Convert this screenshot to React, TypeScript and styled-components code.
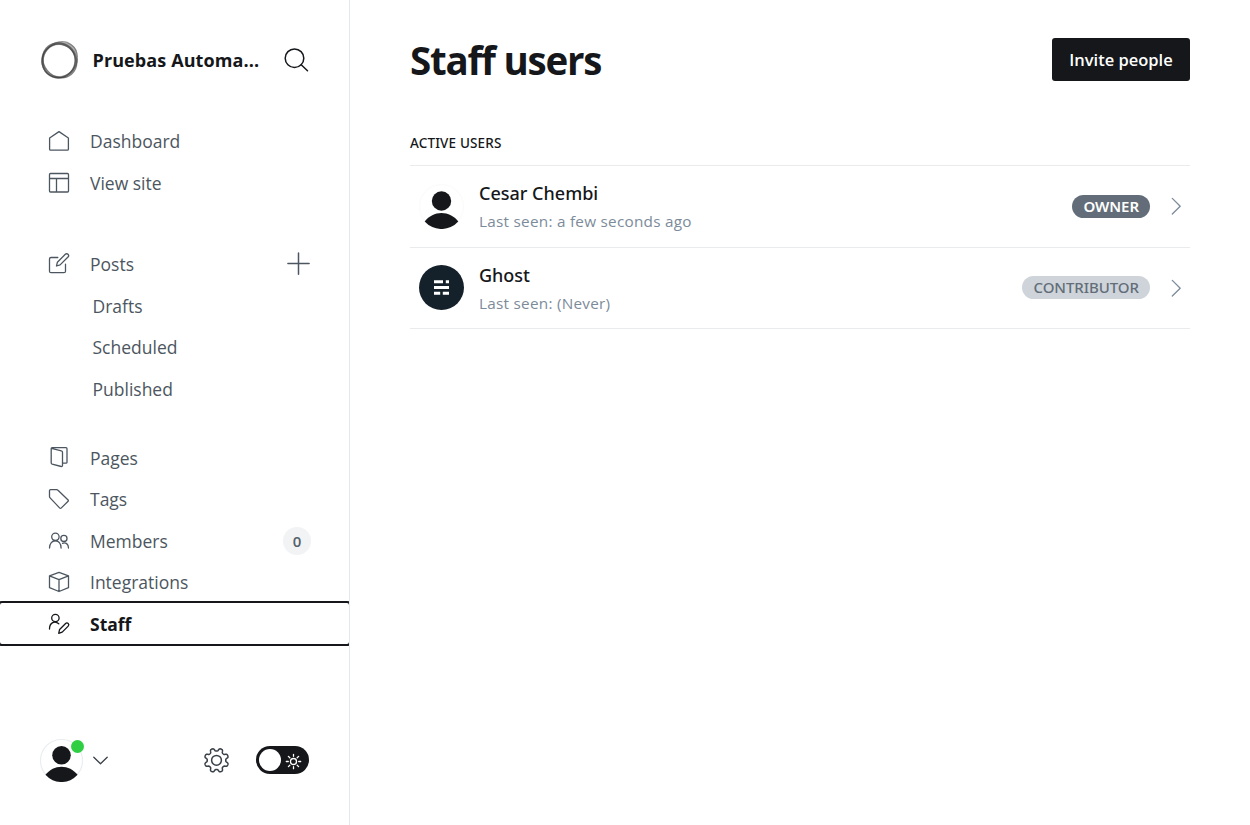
import React from "react";
import styled, { createGlobalStyle } from "styled-components";

const GlobalStyle = createGlobalStyle`
  * { box-sizing: border-box; }
  body {
    margin: 0;
    background: #fff;
    color: #15171a;
    font-family: "Open Sans", "Noto Sans", sans-serif;
    overflow: hidden;
  }
`;

const Shell = styled.div`
  display: flex;
  height: 825px;
`;

const Sidebar = styled.aside`
  width: 350px;
  flex: none;
  display: flex;
  flex-direction: column;
  border-right: 1px solid #e6e9eb;
  overflow: hidden;
`;

const SiteHeader = styled.header`
  display: flex;
  align-items: center;
  height: 120.4px;
  padding: 0 40px 0.6px 40px;
`;

const SiteName = styled.div`
  flex: 1;
  margin-left: 12.5px;
  font-size: 18px;
  font-weight: 700;
  letter-spacing: 0.1px;
  white-space: nowrap;
`;

const NavGroup = styled.nav<{ $gap: number }>`
  display: flex;
  flex-direction: column;
  margin-bottom: ${(p) => p.$gap}px;
`;

const NavItem = styled.a<{ $active?: boolean }>`
  display: flex;
  align-items: center;
  height: 41.5px;
  padding: 0 38px 0 47px;
  font-size: 17.5px;
  font-weight: ${(p) => (p.$active ? 700 : 400)};
  color: ${(p) => (p.$active ? "#15171a" : "#4c5660")};
  outline: ${(p) => (p.$active ? "2px solid #15171a" : "none")};
  border-radius: 2px;
`;

const NavLabel = styled.span<{ $sub?: boolean }>`
  flex: 1;
  margin-left: ${(p) => (p.$sub ? 45.5 : 19)}px;
`;

const Count = styled.span`
  width: 28px;
  height: 28px;
  border-radius: 50%;
  background: #f1f3f4;
  color: #54606a;
  font-size: 15px;
  font-weight: 600;
  line-height: 29px;
  text-align: center;
`;

const Footer = styled.footer`
  display: flex;
  align-items: center;
  height: 44px;
  margin-top: auto;
  margin-bottom: 43px;
  padding: 0 40px;
`;

const UserMenu = styled.div`
  position: relative;
  display: flex;
  align-items: center;
  gap: 9px;
  flex: 1;
`;

const OnlineDot = styled.span`
  position: absolute;
  left: 31px;
  top: 1px;
  width: 13px;
  height: 13px;
  border-radius: 50%;
  background: #30cf43;
`;

const Toggle = styled.div`
  display: flex;
  align-items: center;
  width: 53px;
  height: 28px;
  margin-left: 26px;
  padding: 0 7px 0 3px;
  justify-content: space-between;
  border-radius: 14px;
  background: #15171a;
`;

const Knob = styled.span`
  width: 22px;
  height: 22px;
  border-radius: 50%;
  background: #fff;
`;

const Main = styled.main`
  flex: 1;
  padding: 0 60px;
`;

const PageHeader = styled.header`
  display: flex;
  align-items: center;
  justify-content: space-between;
  height: 120px;
`;

const Title = styled.h1`
  margin: 0 0 1px;
  font-size: 38.5px;
  font-weight: 700;
  letter-spacing: -1.25px;
  line-height: 48px;
`;

const InviteButton = styled.button`
  width: 138px;
  height: 43px;
  margin-top: -1px;
  padding: 0;
  border: 0;
  border-radius: 3px;
  background: #15171a;
  color: #fff;
  font: 600 16.5px "Open Sans", sans-serif;
  white-space: nowrap;
`;

const SectionLabel = styled.h2`
  margin: 0;
  height: 46px;
  padding-top: 13px;
  border-bottom: 1px solid #e9ebed;
  font-family: "Noto Sans", sans-serif;
  font-size: 13.5px;
  font-weight: 500;
  line-height: 20px;
  letter-spacing: 0.15px;
`;

const UserRow = styled.div`
  display: flex;
  align-items: center;
  height: 81.5px;
  padding: 0 8px 0 9px;
  border-bottom: 1px solid #e9ebed;
`;

const UserInfo = styled.div`
  flex: 1;
  margin-left: 15px;
  padding-top: 2px;
`;

const UserName = styled.div`
  font-family: "Noto Sans", sans-serif;
  font-size: 18px;
  font-weight: 500;
  line-height: 28px;
`;

const LastSeen = styled.div`
  font-size: 15.3px;
  line-height: 28px;
  letter-spacing: 0.26px;
  color: #7c8b9a;
`;

const Badge = styled.span<{ $bg: string; $fg: string; $weight: number }>`
  height: 23px;
  margin-right: 20px;
  padding: 0 11px;
  border-radius: 12px;
  background: ${(p) => p.$bg};
  color: ${(p) => p.$fg};
  font: ${(p) => p.$weight} 15px/23px "Noto Sans", sans-serif;
  letter-spacing: -0.05px;
`;

const Icon = styled.svg`
  display: block;
  flex: none;
  fill: none;
  stroke: currentColor;
  stroke-width: 1.3;
  stroke-linecap: round;
  stroke-linejoin: round;
`;

const NavIcon = ({ children }: { children: React.ReactNode }) => (
  <Icon width="24" height="24" viewBox="0 0 24 24">{children}</Icon>
);

const PersonAvatar = ({ size, ring }: { size: number; ring: string }) => (
  <Icon width={size} height={size} viewBox="0 0 45 45">
    <circle cx="22.5" cy="22.5" r="22" fill="#fff" stroke={ring} />
    <g fill="#15171a" stroke="none">
      <circle cx="22.5" cy="17" r="9.7" />
      <path d="M5.7 37.5C10 32 16 29 22.5 29S35 32 39.3 37.5A22.5 22.5 0 0 1 5.7 37.5z" />
    </g>
  </Icon>
);

const GhostAvatar = () => (
  <Icon width="45" height="45" viewBox="0 0 45 45">
    <circle cx="22.5" cy="22.5" r="22.5" fill="#15212a" stroke="none" />
    <path
      d="M15 15.2h9v3h-9zM26.8 15.2H30v3h-3.2zM15 21h15v3H15zM15 26.8h6.2v3H15zM23.8 26.8H30v3h-6.2z"
      fill="#fff"
      stroke="none"
    />
  </Icon>
);

const SiteLogo = () => (
  <Icon width="40" height="40" viewBox="0 0 40 40">
    <g strokeOpacity="0.55">
      <circle cx="18.8" cy="21" r="16.8" stroke="#333" />
      <ellipse cx="20.2" cy="19.4" rx="18.4" ry="16.4" transform="rotate(-52 20.2 19.4)" stroke="#444" />
      <ellipse cx="19.8" cy="20.2" rx="18.2" ry="16.2" transform="rotate(50 19.8 20.2)" stroke="#222" />
      <ellipse cx="18.6" cy="20.8" rx="16.4" ry="17.2" transform="rotate(20 18.6 20.8)" stroke="#222" />
    </g>
    <path
      d="M14 3.800C24 0.500 33 3 36.500 10l.8 7C34 10 27 5.500 14 3.800zM37.500 19c0 9-5 15-13 17.500 7-4 11-10 13-17.500z"
      fill="#666"
      fillOpacity="0.5"
      stroke="none"
    />
    <circle cx="19.200" cy="20.600" r="16.800" stroke="#555" strokeOpacity="0.4" style={{ strokeWidth: 2.600 }} />
  </Icon>
);

const gearPath =
  Array.from({ length: 160 }, (_, i) => {
    const a = (i / 160) * Math.PI * 2;
    const r = 10.7 + 1.5 * Math.tanh(-2 * Math.cos(8 * a));
    return `${i ? "L" : "M"}${(12.5 + r * Math.cos(a)).toFixed(2)} ${(13.3 + r * Math.sin(a)).toFixed(2)}`;
  }).join("") + "z";

const Gear = () => (
  <Icon width="26" height="26" viewBox="0 0 26 26" color="#394047" style={{ strokeWidth: 1.5 }}>
    <path d={gearPath} />
    <circle cx="12.5" cy="13.3" r="4.9" />
  </Icon>
);

const Sun = () => (
  <Icon width="17" height="17" viewBox="0 0 17 17" color="#fff" style={{ marginTop: 2 }}>
    <circle cx="8.5" cy="8.5" r="3" />
    <path d="M8.5 1.3v2M8.5 13.7v2M1.3 8.5h2M13.7 8.5h2M3.4 3.4l1.4 1.4M12.2 12.2l1.4 1.4M3.4 13.6l1.4-1.4M12.2 4.8l1.4-1.4" />
  </Icon>
);

const RowArrow = () => (
  <Icon width="12" height="18" viewBox="0 0 12 18" color="#7c8b9a">
    <path d="M2.3 1.4L10.2 9.200l-7.900 7.800" />
  </Icon>
);

const icons = {
  home: <path d="M2.6 9L12 2.600l9.400 6.400v11.200a1 1 0 0 1-1 1H3.600a1 1 0 0 1-1-1z" />,
  layout: <path d="M3.500 2.500h17a1 1 0 0 1 1 1v16.500a1 1 0 0 1-1 1h-17a1 1 0 0 1-1-1V3.500a1 1 0 0 1 1-1zM2.500 7.500h19M9.500 7.500v13.500" />,
  posts: (
    <path d="M10.800 5.500H4a1.500 1.500 0 0 0-1.500 1.500v12.200a1.500 1.500 0 0 0 1.500 1.500H17a1.500 1.500 0 0 0 1.500-1.500v-7M9.500 14l.9-3.800 7.900-7.900a1.900 1.900 0 0 1 2.700 2.700l-7.900 7.900z" />
  ),
  pages: <path d="M4.400 2.300l10 2.500a1.400 1.400 0 0 1 1.100 1.400v13.300a1 1 0 0 1-1.300 1l-9-2.300a1.400 1.400 0 0 1-1-1.400V2.600a.9.900 0 0 1 .9-.9H19a1 1 0 0 1 1 1v13.500a1 1 0 0 1-1 1h-3.300" />,
  tag: <path d="M3.600 2.700h6a2 2 0 0 1 1.400.6l10.100 9.700a.9.900 0 0 1 0 1.300l-7 6.800a.9.900 0 0 1-1.300 0L3.100 10.900a2 2 0 0 1-.6-1.400V3.700a1 1 0 0 1 1.100-1z" />,
  members: (
    <>
      <circle cx="8.400" cy="7.800" r="3.700" />
      <circle cx="16.900" cy="9.400" r="3.100" />
      <path d="M2.500 19.100c0-9.600 11.400-10 11.600 0M15.500 14.300c3-1.300 6 .6 6 4.800" />
    </>
  ),
  box: <path d="M12 2.300l9.500 3.500v11.900L12 21.500l-9.500-3.800V5.800zM2.500 5.800L12 9.700l9.500-3.900M12 9.700v11.800" />,
  staff: (
    <>
      <circle cx="8.400" cy="6" r="3.700" />
      <path d="M2.500 17c0-6.500 5.500-8.600 9.300-5.200M11.700 21.300l.9-3.800 6-6a1.800 1.800 0 0 1 2.600 2.600l-6 6z" />
    </>
  ),
};

export default function App() {
  return (
    <Shell>
      <GlobalStyle />
      <Sidebar>
        <SiteHeader>
          <SiteLogo />
          <SiteName>Pruebas Automa...</SiteName>
          <Icon width="26" height="26" viewBox="0 0 26 26" style={{ strokeWidth: 1.5 }}>
            <circle cx="11.500" cy="11.200" r="9.300" />
            <path d="M18.200 17.800l6.300 6" />
          </Icon>
        </SiteHeader>
        <NavGroup $gap={40.2}>
          <NavItem><NavIcon>{icons.home}</NavIcon><NavLabel>Dashboard</NavLabel></NavItem>
          <NavItem><NavIcon>{icons.layout}</NavIcon><NavLabel>View site</NavLabel></NavItem>
        </NavGroup>
        <NavGroup $gap={27.2}>
          <NavItem>
            <NavIcon>{icons.posts}</NavIcon>
            <NavLabel>Posts</NavLabel>
            <Icon width="26" height="26" viewBox="0 0 26 26" style={{ strokeWidth: 1.5 }}>
              <path d="M13.500 2v21.200M2.900 12.500h21.200" />
            </Icon>
          </NavItem>
          {["Drafts", "Scheduled", "Published"].map((label) => (
            <NavItem key={label}><NavLabel $sub>{label}</NavLabel></NavItem>
          ))}
        </NavGroup>
        <NavGroup $gap={0}>
          <NavItem><NavIcon>{icons.pages}</NavIcon><NavLabel>Pages</NavLabel></NavItem>
          <NavItem><NavIcon>{icons.tag}</NavIcon><NavLabel>Tags</NavLabel></NavItem>
          <NavItem><NavIcon>{icons.members}</NavIcon><NavLabel>Members</NavLabel><Count>0</Count></NavItem>
          <NavItem><NavIcon>{icons.box}</NavIcon><NavLabel>Integrations</NavLabel></NavItem>
          <NavItem $active><NavIcon>{icons.staff}</NavIcon><NavLabel>Staff</NavLabel></NavItem>
        </NavGroup>
        <Footer>
          <UserMenu>
            <PersonAvatar size={43} ring="#ebeef0" />
            <OnlineDot />
            <Icon width="16" height="10" viewBox="0 0 16 10" color="#394047">
              <path d="M1.800 2.300L8.500 8.800l6.700-6.500" />
            </Icon>
          </UserMenu>
          <Gear />
          <Toggle><Knob /><Sun /></Toggle>
        </Footer>
      </Sidebar>
      <Main>
        <PageHeader>
          <Title>Staff users</Title>
          <InviteButton>Invite people</InviteButton>
        </PageHeader>
        <SectionLabel>ACTIVE USERS</SectionLabel>
        <UserRow>
          <PersonAvatar size={45} ring="#fbfbfc" />
          <UserInfo>
            <UserName>Cesar Chembi</UserName>
            <LastSeen>Last seen: a few seconds ago</LastSeen>
          </UserInfo>
          <Badge $bg="#626d79" $fg="#fff" $weight={600}>OWNER</Badge>
          <RowArrow />
        </UserRow>
        <UserRow>
          <GhostAvatar />
          <UserInfo>
            <UserName>Ghost</UserName>
            <LastSeen>Last seen: (Never)</LastSeen>
          </UserInfo>
          <Badge $bg="#ced4d9" $fg="#626d79" $weight={500}>CONTRIBUTOR</Badge>
          <RowArrow />
        </UserRow>
      </Main>
    </Shell>
  );
}
